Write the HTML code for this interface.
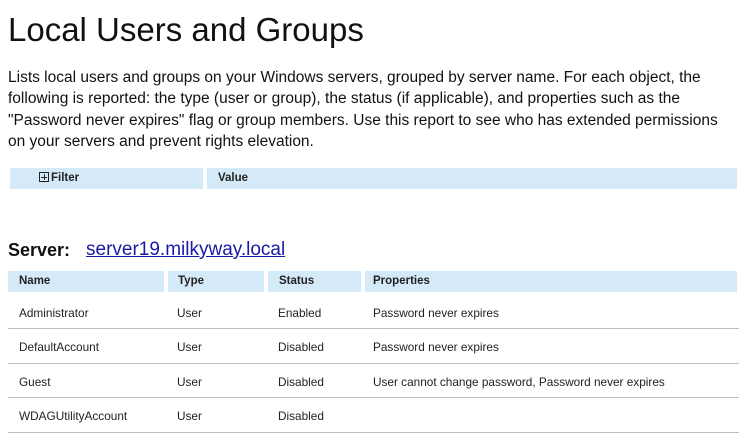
<!DOCTYPE html>
<html><head><style>
body{margin:0;width:742px;height:446px;background:#fff;font-family:"Liberation Sans",sans-serif;color:#111;position:relative;overflow:hidden}
.a{position:absolute;white-space:nowrap}
.bar{position:absolute;background:#d5eaf9;height:21px}
.h{font-size:11.5px;font-weight:bold;color:#222}
.c{font-size:11.8px;color:#222}
.line{position:absolute;left:8px;width:731px;height:1px;background:#bdbdbd}
</style></head><body>
<div class="a" style="left:8px;top:11px;font-size:33px;color:#111">Local Users and Groups</div>
<div class="a" style="left:8px;top:67px;font-size:15.5px;line-height:21.3px;white-space:normal;width:730px">Lists local users and groups on your Windows servers, grouped by server name. For each object, the following is reported: the type (user or group), the status (if applicable), and properties such as the "Password never expires" flag or group members. Use this report to see who has extended permissions on your servers and prevent rights elevation.</div>
<div class="bar" style="left:10px;top:168px;width:193px"></div>
<div class="bar" style="left:207px;top:168px;width:530px"></div>
<div class="a h" style="left:39px;top:172px"><span style="display:inline-block;width:8px;height:8px;border:1px solid #222;position:relative;vertical-align:-1px;margin-right:2px"><span style="position:absolute;left:1px;top:4px;width:6px;height:1px;background:#222"></span><span style="position:absolute;left:4px;top:1px;width:1px;height:6px;background:#222"></span></span>Filter</div>
<div class="a h" style="left:218px;top:172px">Value</div>
<div class="a" style="left:8px;top:240px;font-size:18px;font-weight:bold">Server:</div>
<div class="a" style="left:86px;top:239px;font-size:19px;color:#1a1aa6;text-decoration:underline">server19.milkyway.local</div>
<div class="bar" style="left:8px;top:271px;width:156px"></div>
<div class="bar" style="left:168px;top:271px;width:96px"></div>
<div class="bar" style="left:268px;top:271px;width:93px"></div>
<div class="bar" style="left:365px;top:271px;width:372px"></div>
<div class="a h" style="left:19px;top:275px">Name</div>
<div class="a h" style="left:178px;top:275px">Type</div>
<div class="a h" style="left:279px;top:275px">Status</div>
<div class="a h" style="left:373px;top:275px">Properties</div>

<div class="a c" style="left:19px;top:306px">Administrator</div><div class="a c" style="left:177px;top:306px">User</div><div class="a c" style="left:278px;top:306px">Enabled</div><div class="a c" style="left:373px;top:306px">Password never expires</div>
<div class="line" style="top:328px"></div>
<div class="a c" style="left:19px;top:340px">DefaultAccount</div><div class="a c" style="left:177px;top:340px">User</div><div class="a c" style="left:278px;top:340px">Disabled</div><div class="a c" style="left:373px;top:340px">Password never expires</div>
<div class="line" style="top:363px"></div>
<div class="a c" style="left:19px;top:375px">Guest</div><div class="a c" style="left:177px;top:375px">User</div><div class="a c" style="left:278px;top:375px">Disabled</div><div class="a c" style="left:373px;top:375px">User cannot change password, Password never expires</div>
<div class="line" style="top:397px"></div>
<div class="a c" style="left:19px;top:409px">WDAGUtilityAccount</div><div class="a c" style="left:177px;top:409px">User</div><div class="a c" style="left:278px;top:409px">Disabled</div>
<div class="line" style="top:432px"></div>
</body></html>
